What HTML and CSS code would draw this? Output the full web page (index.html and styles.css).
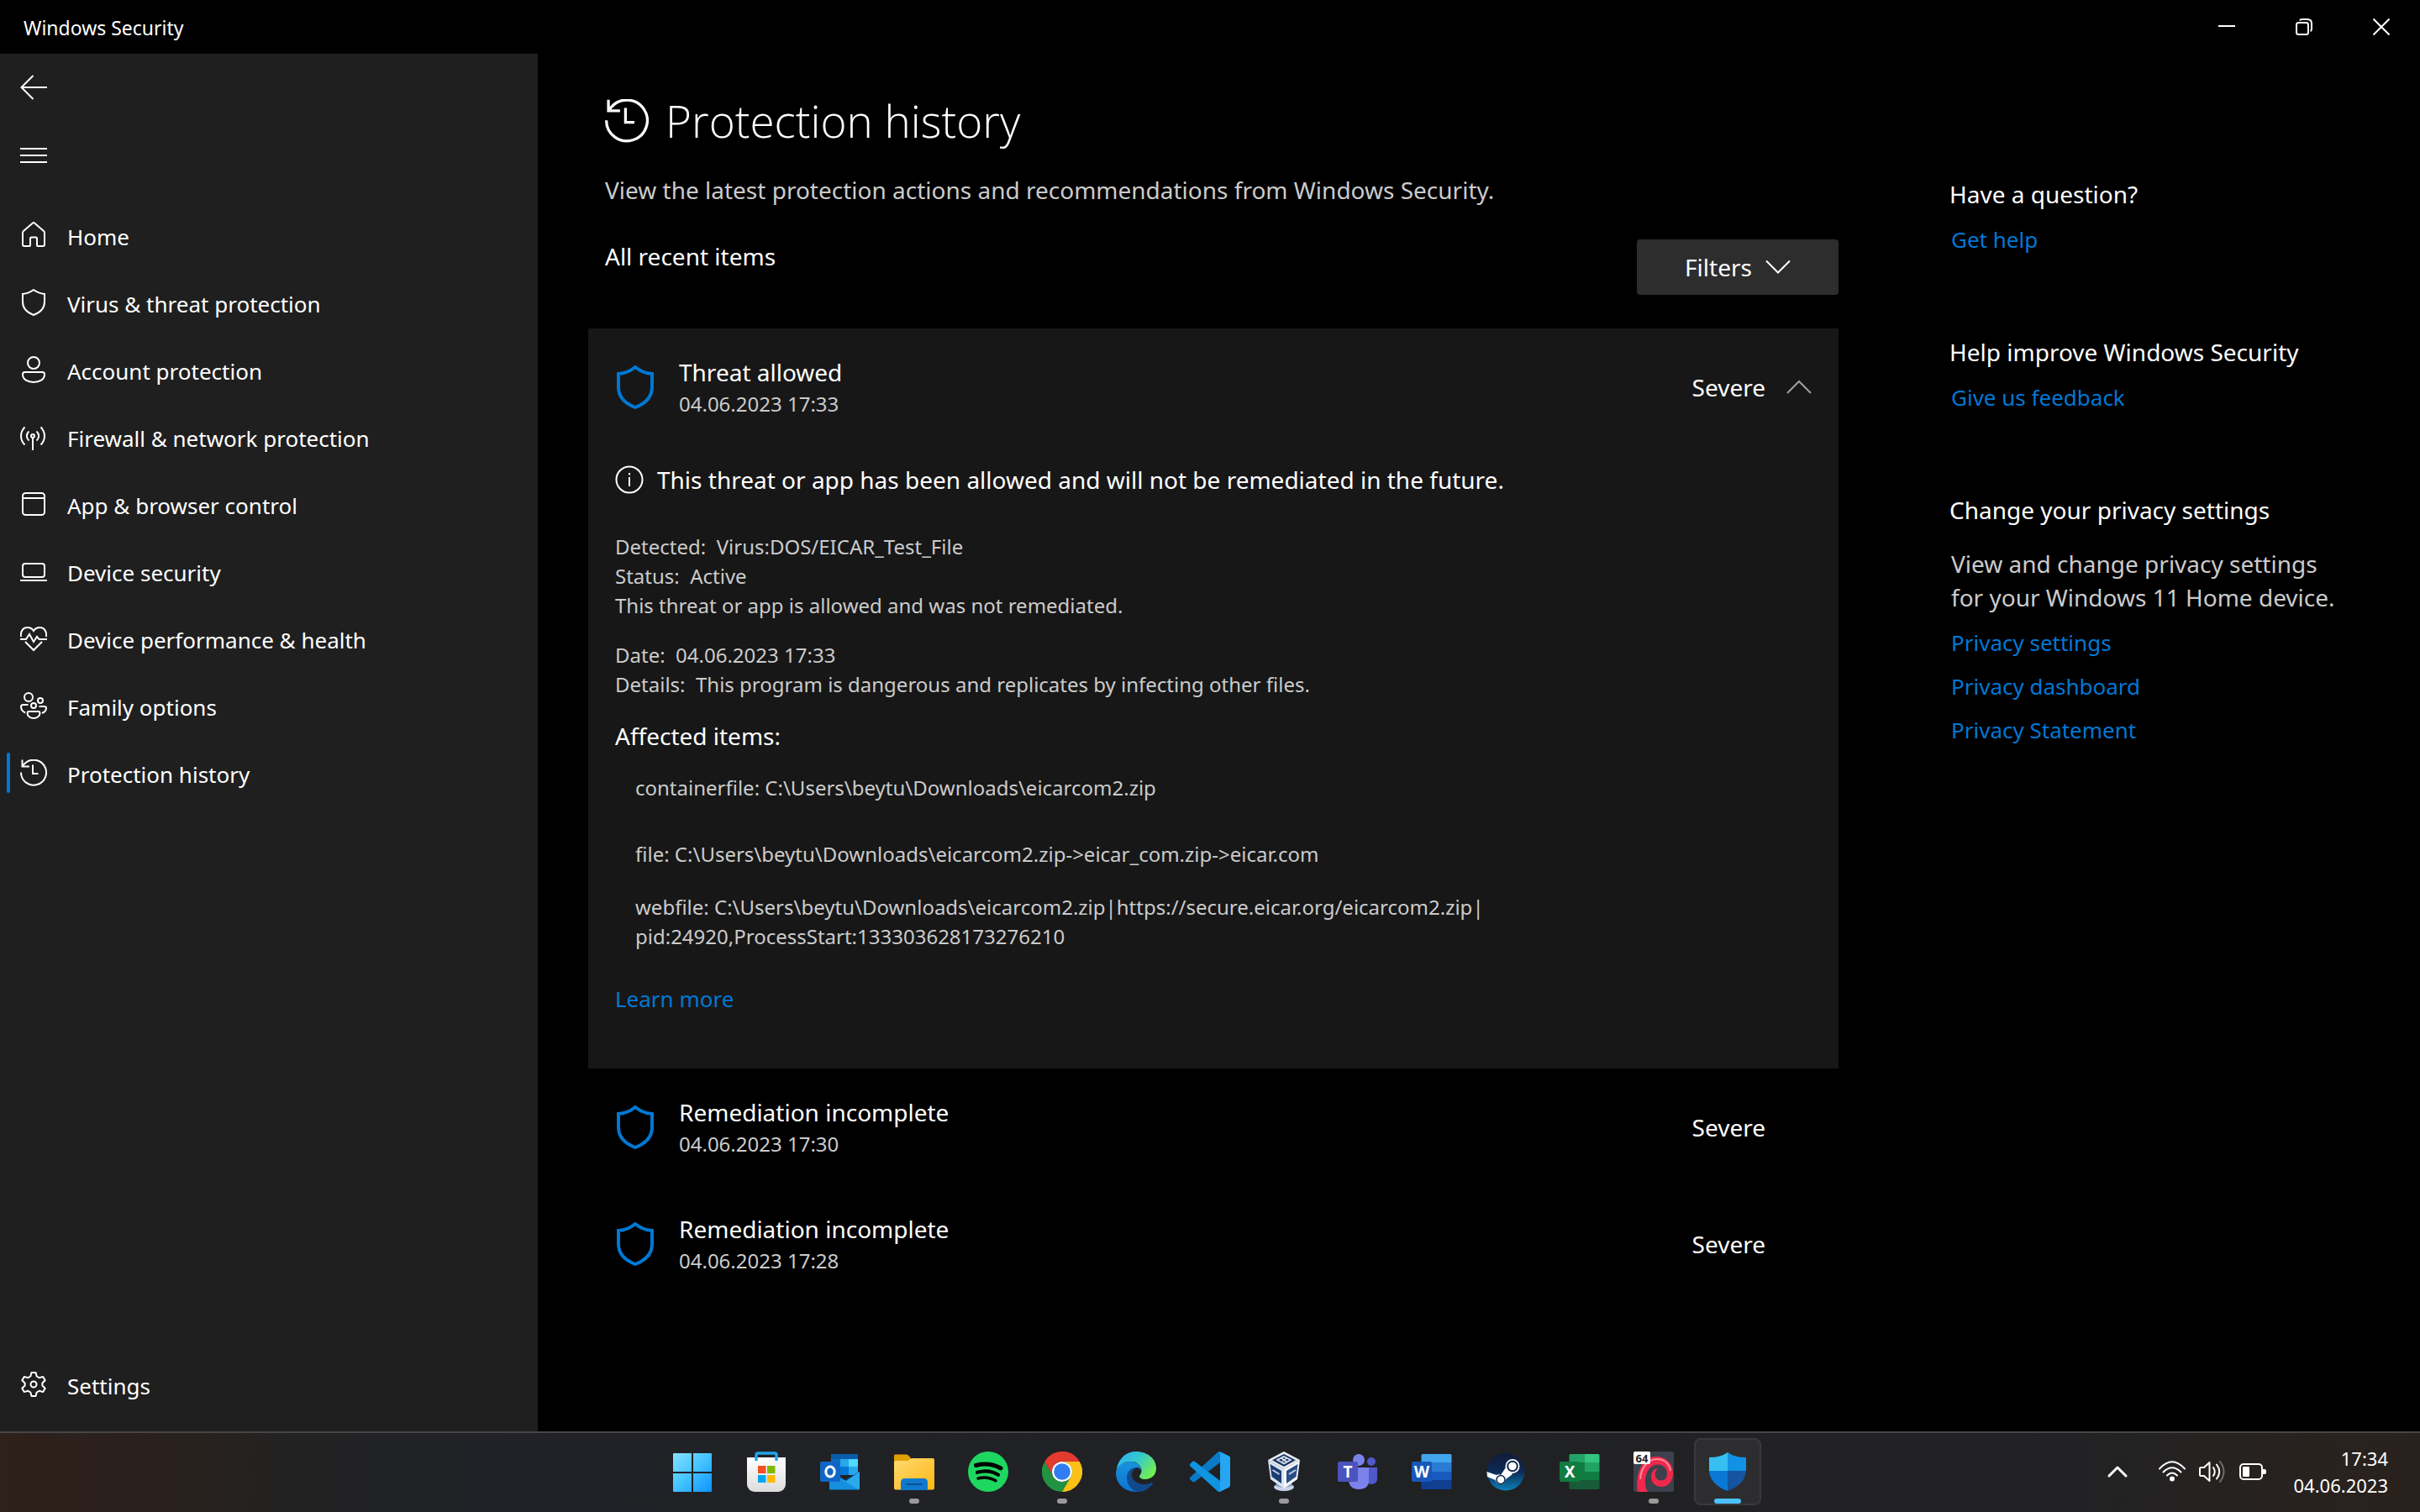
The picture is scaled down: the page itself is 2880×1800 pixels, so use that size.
FILE: index.html
```html
<!DOCTYPE html>
<html lang="en">
<head>
<meta charset="utf-8">
<title>Windows Security</title>
<meta name="viewport" content="width=device-width, initial-scale=1">
<link rel="stylesheet" href="styles.css">
</head>
<body>
<svg class="sprite" aria-hidden="true">
  <symbol id="history" viewBox="0 0 32 32"><path d="M1 15.500a15 15 0 1 0 3.500-9.500L2.500 8.500M2.500 0.500V8.500H11M15 6.500V17h6.500"/></symbol>
  <symbol id="shield" viewBox="0 0 32 32"><path d="M16 1C12 4 8 5.500 3 6v9.500C3 23 8 28 16 31c8-3 13-8 13-15.500V6C24 5.500 20 4 16 1Z"/></symbol>
  <symbol id="shield-large" viewBox="0 0 46 52"><path d="M23 2C17.500 6.500 11.500 9.500 3 10v16c0 11 7 19 20 24 13-5 20-13 20-24V10C34.500 9.500 28.500 6.500 23 2Z"/></symbol>
  <symbol id="chevron-down" viewBox="0 0 30 18"><path d="M1 1.500 15 15.500 29 1.500"/></symbol>
  <symbol id="chevron-up" viewBox="0 0 30 18"><path d="M1 16 15 2l14 14"/></symbol>
</svg>

<header class="titlebar">
  <span class="titlebar-name">Windows Security</span>
  <div class="caption-buttons">
    <button type="button" aria-label="Minimize"><svg class="line" width="20" height="20" viewBox="0 0 20 20"><path d="M0 9h20"/></svg></button>
    <button type="button" aria-label="Restore"><svg class="line" width="20" height="20" viewBox="0 0 20 20"><rect x="1" y="5" width="14" height="14" rx="2.500"/><path d="M5 2.500Q5.500 1 7.500 1H14q5 0 5 5v6.500Q19 14.500 17.500 15"/></svg></button>
    <button type="button" aria-label="Close"><svg class="line" width="20" height="20" viewBox="0 0 20 20"><path d="m.5.5 19 19m0-19-19 19"/></svg></button>
  </div>
</header>

<div class="app">
  <nav class="sidebar" aria-label="Sections">
    <button type="button" class="nav-item" aria-label="Back"><svg class="line icon" viewBox="0 0 32 32"><path d="M15.500 2 1.500 16l14 14M1.500 16H32"/></svg></button>
    <button type="button" class="nav-item" aria-label="Menu"><svg class="line icon" viewBox="0 0 32 32"><path d="M0 9h32M0 17h32M0 25h32"/></svg></button>
    <div class="nav-list">
      <a class="nav-item" href="#home"><svg class="line icon" viewBox="0 0 32 32"><path d="M15 1.500q1-.8 2 0L28 11q1 1 1 2.500V27q0 2-2 2h-6q-1 0-1-1v-8q0-1.500-1.500-1.500h-5Q12 18.500 12 20v8q0 1-1 1H5q-2 0-2-2V13.500Q3 12 4 11Z"/></svg><span>Home</span></a>
      <a class="nav-item" href="#virus"><svg class="line icon"><use href="#shield"/></svg><span>Virus &amp; threat protection</span></a>
      <a class="nav-item" href="#account"><svg class="line icon" viewBox="0 0 32 32"><circle cx="16" cy="8" r="7"/><path d="M5.500 19h21q2.500 0 2.500 2.500C29 28 23 31 16 31S3 28 3 21.500Q3 19 5.500 19Z"/></svg><span>Account protection</span></a>
      <a class="nav-item" href="#firewall"><svg class="line icon" viewBox="0 0 32 32"><circle cx="15" cy="15" r="2"/><path d="M15 17v15M10.500 9.500c-3.500 3-3.500 8 0 11M19.500 9.500c3.500 3 3.500 8 0 11M5.500 4.500c-6 6-6 15 0 21M24.500 4.500c6 6 6 15 0 21"/></svg><span>Firewall &amp; network protection</span></a>
      <a class="nav-item" href="#app"><svg class="line icon" viewBox="0 0 32 32"><rect x="3" y="3" width="26" height="26" rx="3.500"/><path d="M3 9h26"/></svg><span>App &amp; browser control</span></a>
      <a class="nav-item" href="#device"><svg class="line icon" viewBox="0 0 32 32"><rect x="3" y="7" width="26" height="16" rx="3"/><path d="M0 27h32"/></svg><span>Device security</span></a>
      <a class="nav-item" href="#health"><svg class="line icon" viewBox="0 0 32 32"><path d="M1 14C0 7 4 3 8.500 3c3 0 6 1.500 7.500 4 1.500-2.500 4.500-4 7.500-4C28 3 32 7 31 14M0 17h7l4-6 5 9 4-6 2.500 3H32M6 20l10 10 10-10"/></svg><span>Device performance &amp; health</span></a>
      <a class="nav-item" href="#family"><svg class="line icon" viewBox="0 0 32 32"><circle cx="10" cy="6" r="5"/><circle cx="24" cy="10" r="3"/><circle cx="16" cy="16" r="3"/><path d="M9.500 15H3.500Q1 15 1 17.500 1 22 6 24.500M22.500 17h6q2.500 0 2.500 2 0 4-5 6M10.500 23h11q2 0 2 2c0 4-4 6-7.500 6s-7.500-2-7.500-6q0-2 2-2Z"/></svg><span>Family options</span></a>
      <a class="nav-item is-current" href="#history-page" aria-current="page"><svg class="line icon"><use href="#history"/></svg><span>Protection history</span></a>
    </div>
    <a class="nav-item nav-settings" href="#settings"><svg class="line icon" viewBox="0 0 32 32"><path d="M13.500 2h5l1.200 4.500 3 1.700 4.500-1.300 2.500 4.400-3.300 3.200v3l3.300 3.200-2.500 4.400-4.500-1.300-3 1.700L18.500 30h-5l-1.200-4.500-3-1.700-4.500 1.300-2.500-4.400 3.300-3.200v-3l-3.300-3.200 2.500-4.400 4.500 1.300 3-1.700Z" stroke-linejoin="round"/><circle cx="16" cy="16" r="3.500"/></svg><span>Settings</span></a>
  </nav>

  <main class="page">
    <section class="content">
      <h1><svg class="line" width="52" height="52"><use href="#history"/></svg>Protection history</h1>
      <p class="lead">View the latest protection actions and recommendations from Windows Security.</p>
      <div class="toolbar">
        <h2>All recent items</h2>
        <button type="button" class="filters">Filters<svg class="line" width="30" height="18"><use href="#chevron-down"/></svg></button>
      </div>

      <article class="entry is-open">
        <button type="button" class="entry-head" aria-expanded="true">
          <svg class="line entry-shield"><use href="#shield-large"/></svg>
          <span class="entry-title"><span class="strong">Threat allowed</span><span class="small">04.06.2023 17:33</span></span>
          <span class="strong">Severe</span>
          <svg class="line entry-chevron"><use href="#chevron-up"/></svg>
        </button>
        <div class="entry-body">
          <p class="notice"><svg class="line" width="34" height="34" viewBox="0 0 34 34"><circle cx="17" cy="17" r="15.500"/><path d="M17 14v11M17 9v2.500"/></svg>This threat or app has been allowed and will not be remediated in the future.</p>
          <div class="facts">
            <p>Detected:&nbsp; Virus:DOS/EICAR_Test_File</p>
            <p>Status:&nbsp; Active</p>
            <p>This threat or app is allowed and was not remediated.</p>
          </div>
          <div class="facts">
            <p>Date:&nbsp; 04.06.2023 17:33</p>
            <p>Details:&nbsp; This program is dangerous and replicates by infecting other files.</p>
          </div>
          <h3>Affected items:</h3>
          <ul class="affected">
            <li class="container-file">containerfile: C:\Users\beytu\Downloads\eicarcom2.zip</li>
            <li>file: C:\Users\beytu\Downloads\eicarcom2.zip-&gt;eicar_com.zip-&gt;eicar.com</li>
            <li>webfile: C:\Users\beytu\Downloads\eicarcom2.zip|https://secure.eicar.org/eicarcom2.zip|<br>pid:24920,ProcessStart:133303628173276210</li>
          </ul>
          <a href="#learn">Learn more</a>
        </div>
      </article>

      <article class="entry">
        <button type="button" class="entry-head" aria-expanded="false">
          <svg class="line entry-shield"><use href="#shield-large"/></svg>
          <span class="entry-title"><span class="strong">Remediation incomplete</span><span class="small">04.06.2023 17:30</span></span>
          <span class="strong">Severe</span>
          <span class="entry-chevron"></span>
        </button>
      </article>
      <article class="entry">
        <button type="button" class="entry-head" aria-expanded="false">
          <svg class="line entry-shield"><use href="#shield-large"/></svg>
          <span class="entry-title"><span class="strong">Remediation incomplete</span><span class="small">04.06.2023 17:28</span></span>
          <span class="strong">Severe</span>
          <span class="entry-chevron"></span>
        </button>
      </article>
    </section>

    <aside class="help">
      <section>
        <h2>Have a question?</h2>
        <a href="#help">Get help</a>
      </section>
      <section>
        <h2>Help improve Windows Security</h2>
        <a href="#feedback">Give us feedback</a>
      </section>
      <section>
        <h2>Change your privacy settings</h2>
        <p>View and change privacy settings<br>for your Windows 11 Home device.</p>
        <a href="#privacy">Privacy settings</a>
        <a href="#dashboard">Privacy dashboard</a>
        <a href="#statement">Privacy Statement</a>
      </section>
    </aside>
  </main>
</div>

<footer class="taskbar">
  <div class="pins">
    <button type="button" aria-label="Start"><svg width="48" height="48" viewBox="0 0 48 48"><defs><linearGradient id="g-start" x1="0" y1="0" x2="48" y2="48" gradientUnits="userSpaceOnUse"><stop stop-color="#8be3ff"/><stop offset=".5" stop-color="#45c4ff"/><stop offset="1" stop-color="#0a92ff"/></linearGradient></defs><path fill="url(#g-start)" d="M1 3a1 1 0 0 1 1-1h21v22H1ZM25 2h21a1 1 0 0 1 1 1v21H25ZM1 26h22v22H2a1 1 0 0 1-1-1ZM25 26h22v21a1 1 0 0 1-1 1H25Z"/></svg></button>
    <button type="button" aria-label="Microsoft Store"><svg width="48" height="48" viewBox="0 0 48 48"><defs><linearGradient id="g-bag" x1="0" y1="0" x2="0" y2="1"><stop stop-color="#fff"/><stop offset="1" stop-color="#dcdcdc"/></linearGradient></defs><path fill="url(#g-bag)" d="M1 7h46v32a9 9 0 0 1-9 9H10a9 9 0 0 1-9-9Z"/><path fill="none" stroke="#1fa5ea" stroke-width="3.500" d="M12 11V4q0-2 2-2h20q2 0 2 2v7"/><path fill="#f25022" d="M14 17h9.500v9H14z"/><path fill="#7fba00" d="M25 17h9.500v9H25z"/><path fill="#00a4ef" d="M14 28h9.500v9H14z"/><path fill="#ffb900" d="M25 28h9.500v9H25z"/></svg></button>
    <button type="button" aria-label="Outlook"><svg width="48" height="48" viewBox="0 0 48 48"><path fill="#0a5cab" d="M14 3h30a1 1 0 0 1 1 1v24H13V4a1 1 0 0 1 1-1Z"/><path fill="#0f6cc0" d="M13 9h11v9H13z"/><path fill="#28a8ea" d="M24 9h10v9H24z"/><path fill="#50d9ff" d="M34 9h11v9H34z"/><path fill="#0078d4" d="M24 18h10v10H24z"/><path fill="#28a8ea" d="M34 18h11v10H34z"/><path fill="#0a4f96" d="M13 20v8l16 7 16-7v-3L29 34Z"/><path fill="#1490df" d="M11 24 31 35 47 24v20a1.500 1.500 0 0 1-1.500 1.500h-33A1.500 1.500 0 0 1 11 44Z"/><path fill="#35b8f1" opacity=".65" d="M47 24v20a1.500 1.500 0 0 1-1 1.400L26 33.500l5 1.500Z"/><rect x="0" y="12" width="24" height="24" rx="2" fill="#1066c5"/><ellipse cx="12" cy="24" rx="5.200" ry="6" fill="none" stroke="#fff" stroke-width="3"/></svg></button>
    <button type="button" class="is-running" aria-label="File Explorer"><svg width="48" height="48" viewBox="0 0 48 48"><defs><linearGradient id="g-folder" x1="0" y1="0" x2="1" y2="1"><stop stop-color="#ffd970"/><stop offset="1" stop-color="#fdb914"/></linearGradient></defs><path fill="#e0a000" d="M0 5a1.500 1.500 0 0 1 1.500-1.500H14q2 0 3 1l4 4.500v5H0Z"/><path fill="url(#g-folder)" d="M0 13q0-2 2-2h13q2 0 3.500-1.500Q20 8 22 8h24a2 2 0 0 1 2 2v33.500a2 2 0 0 1-2 2H2a2 2 0 0 1-2-2Z"/><path fill="#1079cc" d="M8 46V37q0-5 5-5h22q5 0 5 5v9Z"/><rect x="14" y="38" width="20" height="2" rx="1" fill="#0a4f96"/></svg></button>
    <button type="button" aria-label="Spotify"><svg width="48" height="48" viewBox="0 0 48 48"><circle cx="24" cy="24" r="24" fill="#1ed760"/><path fill="none" stroke="#000" stroke-linecap="round" stroke-width="5" d="M9.500 16.500q16-4 29.500 3.500"/><path fill="none" stroke="#000" stroke-linecap="round" stroke-width="4.200" d="M11 24.800q14-4 25 3"/><path fill="none" stroke="#000" stroke-linecap="round" stroke-width="3.400" d="M12 32q11-3 21 2.800"/></svg></button>
    <button type="button" class="is-running" aria-label="Chrome"><svg width="48" height="48" viewBox="0 0 48 48"><path fill="#e33b2e" d="M24 12H44.800A24 24 0 0 0 3.200 12L13.600 30A12 12 0 0 1 24 12Z"/><path fill="#229342" d="M13.600 30 3.200 12A24 24 0 0 0 24 48l10.400-18a12 12 0 0 1-20.800 0Z"/><path fill="#fbc116" d="M34.400 30 24 48A24 24 0 0 0 44.800 12H24a12 12 0 0 1 10.400 18Z"/><circle cx="24" cy="24" r="12" fill="#fff"/><circle cx="24" cy="24" r="9.800" fill="#2f7df0"/></svg></button>
    <button type="button" aria-label="Edge"><svg width="48" height="48" viewBox="0 0 48 48"><defs><linearGradient id="g-edge" x1="0" y1="0" x2="1" y2=".6"><stop offset=".1" stop-color="#2fb2ee"/><stop offset=".5" stop-color="#33c8d0"/><stop offset="1" stop-color="#72ee55"/></linearGradient><linearGradient id="g-edge2" x1="0" y1="0" x2="0" y2="1"><stop stop-color="#1a92dc"/><stop offset="1" stop-color="#0a74d2"/></linearGradient></defs><path fill="url(#g-edge)" d="M.5 22C3 8 12 0 24 0c14 0 24 9 24 20 0 8-6 13-13 13-5 0-7-2-7-3.500 0-1.500 2.500-2.500 2.500-7C30.500 17 25 12 18 12 9 12 3 17 .5 22Z"/><path fill="url(#g-edge2)" d="M0 25C1 17 9 12 17 12c8 0 13.500 5 13.500 11C29 20 27 19 25 19c-6 0-11 6-11 12 0 9 8 15 15 16.500C14 50 0 41 0 25Z"/><path fill="#114a8b" d="M25 19c-8 0-12 6-12 12 0 9 7 16.500 14 17 7 0 13-4 17-10 .6-1-.5-1.700-1.500-1.200C36 41 25 39 20.500 33 17 28 19 22 25 19Z"/></svg></button>
    <button type="button" aria-label="Visual Studio Code"><svg width="48" height="48" viewBox="0 0 24 24"><path fill="#0a7ac6" d="M23.150 2.587 18.210.21a1.494 1.494 0 0 0-1.705.29l-9.460 8.630-4.120-3.128a.999.999 0 0 0-1.276.057L.327 7.261A1 1 0 0 0 .326 8.740L3.899 12 .326 15.260a1 1 0 0 0 .001 1.479L1.650 17.940a.999.999 0 0 0 1.276.057l4.120-3.128 9.460 8.630a1.492 1.492 0 0 0 1.704.29l4.942-2.377A1.500 1.500 0 0 0 24 20.060V3.939a1.500 1.500 0 0 0-.85-1.352zm-5.146 14.861L10.826 12l7.178-5.448v10.896z"/><path fill="#0f94dd" d="M.33 7.260 1.650 6.060q.6-.5 1.280-.06L18 17.450V24q-.9.100-1.500-.5L.33 8.740Q-.3 8 .33 7.260Z"/><path fill="#26a5f2" d="M17.400.1q.4-.1.800.1l4.950 2.390Q24 3 24 3.940v16.120q0 .94-.85 1.350l-4.950 2.380q-.4.200-.8.100.6-.3.600-1.200V1.300q0-.9-.6-1.200Z"/></svg></button>
    <button type="button" class="is-running" aria-label="VirtualBox"><svg width="48" height="48" viewBox="0 0 48 48"><path fill="#8da0c4" d="M15 37h18l1 5q-2 4-10 4t-10-4Z"/><path fill="#c9d4e8" d="M13 40q11 6 22 0l1 3q-3 4-12 4t-12-4Z"/><path fill="#e9edf5" d="M24 0 43 10 24 21 5 10Z"/><path fill="#18335f" d="M24 3 38 10.200 24 18 10 10.200Z"/><path fill="none" stroke="#dfe6f2" stroke-width="1.600" d="m16 10 8-4 8 4-8 4.500ZM21 8l6 4M27 8l-5 4"/><path fill="#dbe3f0" d="M5 10l19 11v23L8 33Z"/><path fill="#f5f7fb" d="M43 10 24 21v23l16-11Z"/><path fill="#1b3d70" d="m7.500 15 13.500 8v15L9.500 30Z"/><path fill="#284e86" d="m40.500 15-13.500 8v15L38.500 30Z"/><path fill="none" stroke="#c6d4ea" stroke-width="2" d="m10.500 22 8 5M30 27l8-5"/></svg></button>
    <button type="button" aria-label="Teams"><svg width="48" height="48" viewBox="0 0 48 48"><circle cx="25" cy="10" r="7" fill="#7b83eb"/><circle cx="40" cy="12" r="5" fill="#5059c9"/><path fill="#5059c9" d="M33 19h14v13q0 7-7 7t-7-7Z"/><path fill="#7b83eb" d="M14 19h23v15q0 11-12 11-11 0-12-11Z"/><rect x="0" y="12" width="24" height="24" rx="2" fill="#4b53bc"/><text class="glyph" x="12" y="31">T</text></svg></button>
    <button type="button" aria-label="Word"><svg width="48" height="48" viewBox="0 0 48 48"><path fill="#41a5ee" d="M13 3h33a1.500 1.500 0 0 1 1.500 1.500V13h-36V4.500A1.500 1.500 0 0 1 13 3Z"/><path fill="#2b7cd3" d="M11.500 13h36v11h-36z"/><path fill="#185abd" d="M11.500 24h36v10h-36z"/><path fill="#103f91" d="M11.500 34h36v9.500A1.500 1.500 0 0 1 46 45H13a1.500 1.500 0 0 1-1.500-1.500Z"/><rect x="0" y="12" width="24" height="24" rx="2" fill="#1857b8"/><text class="glyph" x="12" y="31">W</text></svg></button>
    <button type="button" aria-label="Steam"><svg width="48" height="48" viewBox="0 0 48 48"><defs><linearGradient id="g-steam" x1="0" y1="0" x2="0" y2="1"><stop stop-color="#121a38"/><stop offset=".5" stop-color="#0d2a57"/><stop offset="1" stop-color="#0c82b8"/></linearGradient></defs><circle cx="24" cy="24" r="22.500" fill="url(#g-steam)"/><path fill="#fff" d="M1.500 24 13 28q3-1.500 5 0l6-9 8 8-8 6q-.5 5.500-6 6-5-.2-6.500-5L2 30Z"/><circle cx="32" cy="17.500" r="8.500" fill="#fff"/><circle cx="32" cy="17.500" r="5.800" fill="none" stroke="#10244a" stroke-width="2"/><circle cx="18" cy="33.500" r="5" fill="none" stroke="#10244a" stroke-width="1.500"/></svg></button>
    <button type="button" aria-label="Excel"><svg width="48" height="48" viewBox="0 0 48 48"><path fill="#21a366" d="M13 3h17v10H11.500V4.500A1.500 1.500 0 0 1 13 3Z"/><path fill="#33c481" d="M30 3h16a1.500 1.500 0 0 1 1.500 1.500V13H30Z"/><path fill="#107c41" d="M11.500 13H30v21H11.500z"/><path fill="#21a366" d="M30 13h17.500v11H30z"/><path fill="#107c41" d="M30 24h17.500v10H30z"/><path fill="#185c37" d="M11.500 34h36v9.500A1.500 1.500 0 0 1 46 45H13a1.500 1.500 0 0 1-1.500-1.500Z"/><rect x="0" y="12" width="24" height="24" rx="2" fill="#107c41"/><text class="glyph" x="12" y="31">X</text></svg></button>
    <button type="button" class="is-running" aria-label="Debian 64-bit"><svg width="48" height="48" viewBox="0 0 48 48"><rect width="48" height="48" rx="2" fill="#3c414d"/><path fill="#f0284c" d="M5 48C4 44 4 40 4.500 35 6 18 14 6 27 6c13 0 20 9 20 20 0 10-6 16-13.500 16C25 42 21 36 21 30c0-6 4-10 8-10-3 3-4 6-3 9 1 4 4 5.500 7 5.500 4 0 7-3 7-8 0-7-5-11-11-11-9 0-14 8-15 18-.4 5 0 10 3 14.500Z"/><path fill="none" stroke="#ff8a9a" stroke-width="2" d="M8 33C9 19 17 9 28 9c9 0 15 6 16 14"/><rect x="0" y="0" width="20" height="15" rx="2" fill="#fff"/><text class="badge-glyph" x="10" y="12.500">64</text></svg></button>
    <button type="button" class="is-active" aria-label="Windows Security"><svg width="48" height="48" viewBox="0 0 48 48"><path fill="#36c0f2" d="M24 1Q16 7 2 7v16h22Z"/><path fill="#1292e4" d="M24 1q8 6 22 6v16H24Z"/><path fill="#0a78d4" d="M2 23h22v24Q3 39 2 23Z"/><path fill="#1454a0" d="M46 23H24v24q21-8 22-24Z"/></svg></button>
  </div>
  <div class="tray">
    <button type="button" aria-label="Show hidden icons"><svg width="24" height="16" viewBox="0 0 24 16"><path class="tray-line" d="M2 13 12 3l10 10"/></svg></button>
    <button type="button" class="tray-group" aria-label="Network, volume and battery">
      <svg width="34" height="28" viewBox="0 0 34 28"><path class="tray-line thin" d="M2 10.500Q17-6 32 10.500M6.500 14.500q10.500-10.500 21 0M11 18.500q6-6 12 0"/><circle cx="17" cy="22.500" r="3" fill="#fff"/></svg>
      <svg width="34" height="28" viewBox="0 0 34 28"><path class="tray-line thin" d="M2 10.500q0-1.500 1.500-1.500H7l6.500-6v22L7 19H3.500Q2 19 2 17.500ZM18 9q3.500 5 0 10M22 5.500q6.500 8.500 0 17"/><path class="tray-line thin faint" d="M26 2q9 12 0 24"/></svg>
      <svg width="34" height="28" viewBox="0 0 34 28"><rect class="tray-line thin" x="2" y="5" width="26" height="18" rx="4"/><rect x="5" y="8" width="8" height="12" rx="1" fill="#fff"/><path fill="#fff" d="M29 11h2q2 0 2 3t-2 3h-2z"/></svg>
    </button>
    <button type="button" class="clock"><span>17:34</span><span>04.06.2023</span></button>
  </div>
</footer>
</body>
</html>
```
FILE: styles.css
```css
:root {
  --text: #fff;
  --muted: #cbcbcb;
  --link: #0078d4;
  --sidebar: #1f1f1f;
  --card: #171717;
}

* {
  box-sizing: border-box;
}

body {
  display: flex;
  flex-direction: column;
  min-height: 100vh;
  margin: 0;
  background: #000;
  color: var(--text);
  font-family: "Segoe UI", "Noto Sans", "Open Sans", sans-serif;
  font-size: 28px;
  line-height: 40px;
}

h1, h2, h3, p, ul {
  margin: 0;
  padding: 0;
  font-size: inherit;
  font-weight: 400;
}

ul {
  list-style: none;
}

button {
  padding: 0;
  border: 0;
  background: none;
  color: inherit;
  font: inherit;
  text-align: left;
}

a {
  color: var(--link);
  font-size: 26px;
  text-decoration: none;
}

svg {
  display: block;
  flex: none;
}

.sprite {
  position: absolute;
  width: 0;
  height: 0;
}

.line {
  fill: none;
  stroke: currentColor;
  stroke-width: 2;
}

/* Title bar */
.titlebar {
  display: flex;
  justify-content: space-between;
  height: 64px;
  padding-left: 28px;
}

.titlebar-name {
  padding-top: 4px;
  font-size: 23px;
  line-height: 58px;
}

.caption-buttons {
  display: flex;
}

.caption-buttons button {
  display: grid;
  place-items: center;
  width: 92px;
}

/* Sidebar */
.app {
  display: grid;
  flex: 1;
  grid-template-columns: 640px minmax(0, 1fr);
}

.sidebar {
  display: flex;
  flex-direction: column;
  padding-bottom: 16px;
  background: var(--sidebar);
}

.nav-list {
  padding-top: 16px;
}

.nav-item {
  position: relative;
  display: flex;
  align-items: center;
  gap: 24px;
  width: 100%;
  height: 80px;
  padding-left: 24px;
  color: var(--text);
}

.nav-item span {
  padding-top: 4px;
}

.icon {
  width: 32px;
  height: 32px;
}

.is-current::before {
  position: absolute;
  top: 16px;
  left: 8px;
  width: 4px;
  height: 48px;
  border-radius: 2px;
  background: var(--link);
  content: "";
}

.nav-settings {
  margin-top: auto;
}

/* Page */
.page {
  display: grid;
  grid-template-columns: minmax(0, 1488px) minmax(0, 1fr);
  gap: 132px;
  padding: 44px 40px 44px 60px;
}

h1 {
  display: flex;
  align-items: center;
  gap: 20px;
  padding-left: 20px;
  font-family: "Segoe UI", "Open Sans", "Noto Sans", sans-serif;
  font-size: 53px;
  font-weight: 300;
  line-height: 72px;
}

.lead {
  padding: 26px 20px 39px;
  color: var(--muted);
}

.toolbar {
  display: flex;
  align-items: flex-start;
  justify-content: space-between;
  padding: 0 0 40px 20px;
}

.filters {
  display: flex;
  align-items: center;
  justify-content: center;
  gap: 16px;
  min-width: 240px;
  height: 66px;
  border-radius: 4px;
  background: #2d2d2d;
}

/* History entries */
.is-open {
  background: var(--card);
}

.entry-head {
  display: flex;
  align-items: center;
  width: 100%;
  height: 139px;
  padding: 0 32px;
}

.entry-shield {
  width: 48px;
  height: 52px;
  color: var(--link);
  stroke-width: 4;
}

.entry-title {
  display: flex;
  flex: 1;
  flex-direction: column;
  padding-left: 28px;
}

.small {
  color: var(--muted);
  font-size: 24px;
  line-height: 35px;
}

.entry-chevron {
  width: 30px;
  height: 18px;
  margin-left: 25px;
  color: #a0a0a0;
}

.entry-body {
  padding: 21px 32px 63px;
}

.notice {
  display: flex;
  align-items: center;
  gap: 16px;
  padding-bottom: 42px;
  line-height: 40px;
}

.facts {
  padding-bottom: 24px;
}

.facts,
.affected {
  color: var(--muted);
  font-size: 24px;
  line-height: 35px;
}

.affected {
  display: grid;
  gap: 28px;
  padding: 24px 24px 36px;
}

.container-file {
  padding-bottom: 16px;
}

/* Help column */
.help {
  display: flex;
  flex-direction: column;
  gap: 94px;
  padding-top: 103px;
}

.help section {
  display: flex;
  flex-direction: column;
  align-items: flex-start;
  gap: 12px;
}

.help h2 {
  padding-bottom: 2px;
}

.help p {
  padding: 10px 0 2px;
  color: var(--muted);
}

.help p,
.help a {
  margin-left: 2px;
}

/* Taskbar */
.taskbar {
  display: grid;
  grid-template-columns: 1fr auto 1fr;
  height: 96px;
  border-top: 2px solid #474546;
  background: linear-gradient(90deg, #2e201b, #29211d 7%, #222222 12%, #202227 20%, #202123 60%, #222224 86%, #29221e 97%, #28211c);
}

.pins {
  display: flex;
  grid-column: 2;
  gap: 8px;
  padding: 6px 0 8px;
}

.pins button {
  position: relative;
  display: grid;
  place-items: center;
  width: 80px;
  border-radius: 8px;
}

.pins .is-active {
  border: 2px solid #39393b;
  background: #2d2d2f;
}

.is-running::after,
.is-active::after {
  position: absolute;
  bottom: 2px;
  width: 12px;
  height: 6px;
  border-radius: 3px;
  background: #9a9a9a;
  content: "";
}

.is-active::after {
  bottom: 0;
  width: 32px;
  background: #4cc2ff;
}

.glyph,
.badge-glyph {
  fill: #fff;
  font-size: 19px;
  font-weight: 700;
  text-anchor: middle;
}

.badge-glyph {
  fill: #222;
  font-size: 13px;
}

.tray {
  display: flex;
  align-items: center;
  justify-content: flex-end;
  padding: 0 38px 2px 0;
}

.tray-group {
  display: flex;
  gap: 14px;
  padding: 0 32px 0 36px;
}

.tray-line {
  fill: none;
  stroke: #fff;
  stroke-linecap: round;
  stroke-linejoin: round;
  stroke-width: 3;
}

.thin {
  stroke-width: 2;
}

.faint {
  opacity: .35;
}

.clock {
  display: flex;
  flex-direction: column;
  font-size: 22px;
  line-height: 32px;
  text-align: right;
}
```
